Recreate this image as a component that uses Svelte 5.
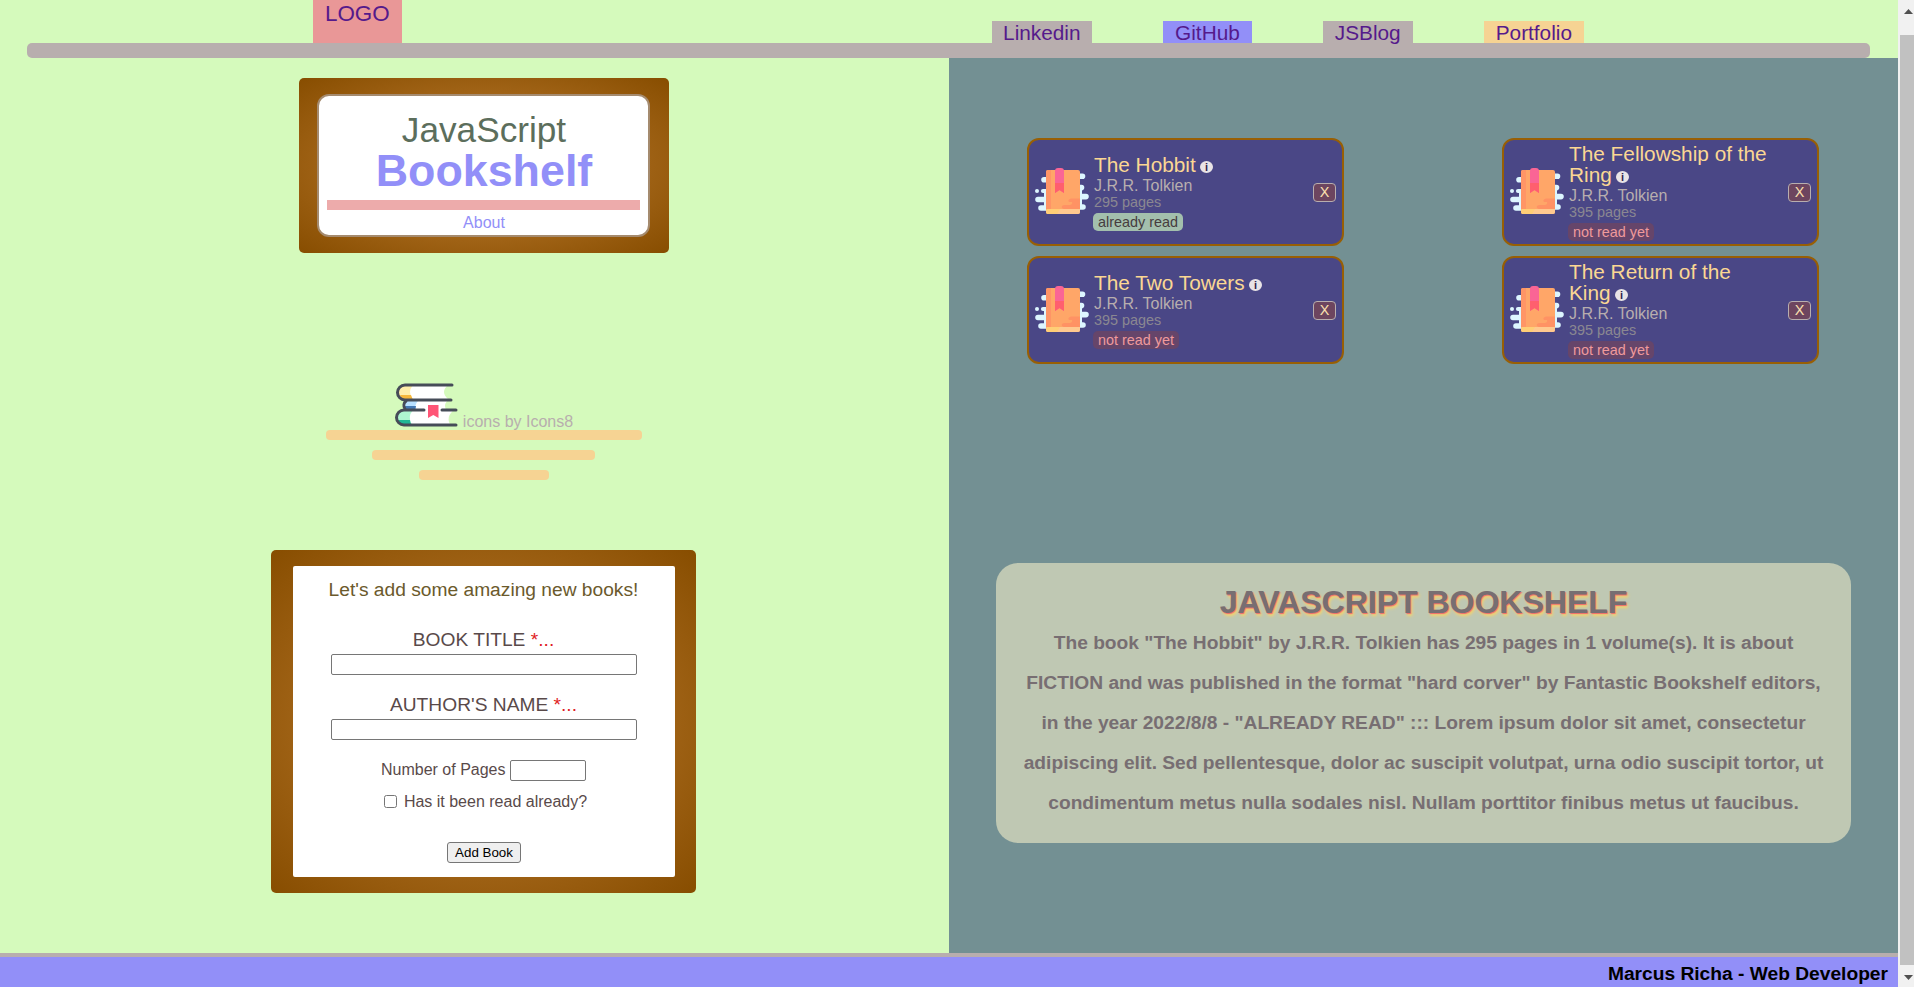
<script>
  const links = [
    { label: 'Linkedin', tone: 'grey' },
    { label: 'GitHub', tone: 'violet' },
    { label: 'JSBlog', tone: 'grey' },
    { label: 'Portfolio', tone: 'sand' }
  ];

  let books = $state([
    { title: 'The Hobbit', author: 'J.R.R. Tolkien', pages: 295, read: true },
    { title: 'The Fellowship of the Ring', author: 'J.R.R. Tolkien', pages: 395, read: false },
    { title: 'The Two Towers', author: 'J.R.R. Tolkien', pages: 395, read: false },
    { title: 'The Return of the King', author: 'J.R.R. Tolkien', pages: 395, read: false }
  ]);

  let title = $state('');
  let author = $state('');
  let pages = $state('');
  let read = $state(false);

  function addBook(event) {
    event.preventDefault();
    if (title && author) books.push({ title, author, pages, read });
  }

  function removeBook(book) {
    books = books.filter((b) => b !== book);
  }
</script>

<div class="window">
  <div class="page">
    <header>
      <a class="logo" href="#logo">LOGO</a>
      <nav>
        {#each links as link}
          <a class={link.tone} href="#{link.label}">{link.label}</a>
        {/each}
      </nav>
    </header>
    <div class="shelf-line"></div>

    <main>
      <section class="left">
        <div class="sign wood">
          <div class="sign-face">
            <div class="sign-top">JavaScript</div>
            <div class="sign-name">Bookshelf</div>
            <div class="sign-bar"></div>
            <div class="about">About</div>
          </div>
        </div>

        <div class="credits">
          <div class="credit-row">
            <svg class="stack" width="66" height="46" viewBox="0 0 66 46" fill="none">
              <path d="M11 3H54Q46 10 54 17H11A7 7 0 0 1 11 3Z" fill="#fff" />
              <path d="M12 3h7q-6 7 0 15h-7A7.5 7.5 0 0 1 12 3Z" fill="#ffeeaa" />
              <path d="M6 13h11l2 5h-7q-4 0-6-5Z" fill="#f6b73c" />
              <path d="M14 19H53Q49 24 53 29H14A5 5 0 0 1 14 19Z" fill="#fff" />
              <path d="M14 19h10q-4 4-2 10h-8A5 5 0 0 1 14 19Z" fill="#b8e0ff" />
              <path d="M10 24h12q-1 3 0 5h-8q-4-1-4-5Z" fill="#4479b4" />
              <path d="M10 28H60Q51 35 57 44H10A7 7 0 0 1 10 28Z" fill="#fff" />
              <path d="M10 28h9q-6 7-1 15h-8A7.500 7.500 0 0 1 10 28Z" fill="#aef6d0" />
              <path d="M4 38h12q0 3 2 5h-7q-6 0-7-5Z" fill="#20b795" />
              <g stroke="#464c58" stroke-width="3" stroke-linecap="round">
                <path d="M58 3H11a7.500 7.500 0 0 0 0 15h46" />
                <path d="M12 19a6 6 0 0 0-1 8" />
                <path d="M30 28H10a7.500 7.500 0 0 0 0 15h52M48 28h14" />
              </g>
              <path d="M34 23h10.500v13l-5.200-3-5.300 3Z" fill="#ff5576" />
            </svg>
            <span>icons by Icons8</span>
          </div>
          <div class="plank wide"></div>
          <div class="plank medium"></div>
          <div class="plank narrow"></div>
        </div>

        <div class="form-frame wood">
          <form onsubmit={addBook}>
            <div class="form-title">Let's add some amazing new books!</div>
            <label class="big" for="title">BOOK TITLE <em>*...</em></label>
            <input class="text" id="title" type="text" bind:value={title} />
            <label class="big" for="author">AUTHOR'S NAME <em>*...</em></label>
            <input class="text" id="author" type="text" bind:value={author} />
            <div class="pages-row">
              <label for="pages">Number of Pages</label>
              <input class="num" id="pages" type="text" bind:value={pages} />
            </div>
            <div class="read-row">
              <input id="read" type="checkbox" bind:checked={read} />
              <label for="read">Has it been read already?</label>
            </div>
            <button class="add" type="submit">Add Book</button>
          </form>
        </div>
      </section>

      <section class="right">
        <div class="cards">
          {#each books as book}
            <article class="card">
              <svg class="book" width="54" height="46" viewBox="0 0 54 46">
                <rect x="9" y="21" width="38" height="19" fill="#ddf6ff" />
                <g stroke="#ddf6ff" stroke-width="5.600" stroke-linecap="round">
                  <path d="M9 11.700h5M42 8.300h5.500M42 19.600h4.500M42 28.600h9M3 31.500h9M42 39h6M6 40h8" />
                </g>
                <circle cx="2" cy="23" r="2" fill="#ddf6ff" />
                <path d="M8 23h4" stroke="#ddf6ff" stroke-width="4.200" stroke-linecap="round" />
                <rect x="11" y="2" width="34" height="44" rx="2" fill="#ffa668" />
                <path d="M11 4q0-2 2-2h3v39h-5Z" fill="#ff9566" />
                <path d="M29 30.500h3M36 30.500h9V41H29q-3-1-2-3 1-1 3-1h5q3-1 2-3h-3q-2-2 2-3.500Z" fill="#ff9264" />
                <path d="M11 43q0-2 2-2h32v3q0 2-2 2H13q-2 0-2-3Z" fill="#ffc98f" />
                <path d="M11 43q0-2 2-2h12l-3 5h-9q-2 0-2-3Z" fill="#ffce76" />
                <path d="M20 3q0-3 3-3h3q3 0 3 3v22l-4.500-3-4.500 3Z" fill="#fa6595" />
                <path d="M20 15h9v10l-4.500-3-4.500 3Z" fill="#ff5f6e" />
              </svg>
              <div class="info">
                <h3>{book.title} <span class="dot">i</span></h3>
                <div class="author">{book.author}</div>
                <div class="pages">{book.pages} pages</div>
                <span class="status" class:read={book.read}>{book.read ? 'already read' : 'not read yet'}</span>
              </div>
              <button class="remove" onclick={() => removeBook(book)}>X</button>
            </article>
          {/each}
        </div>

        <div class="panel">
          <h1>JAVASCRIPT BOOKSHELF</h1>
          <p>
            The book "The Hobbit" by J.R.R. Tolkien has 295 pages in 1 volume(s). It is about FICTION
            and was published in the format "hard corver" by Fantastic Bookshelf editors, in the year
            2022/8/8 - "ALREADY READ" ::: Lorem ipsum dolor sit amet, consectetur adipiscing elit. Sed
            pellentesque, dolor ac suscipit volutpat, urna odio suscipit tortor, ut condimentum metus
            nulla sodales nisl. Nullam porttitor finibus metus ut faucibus.
          </p>
        </div>
      </section>
    </main>

    <footer>Marcus Richa - Web Developer</footer>
  </div>

  <div class="scrollbar">
    <svg width="16" height="35" viewBox="0 0 16 35"><path d="M6 14l4.500-5 4.500 5Z" fill="#505050" /></svg>
    <div class="thumb"></div>
    <svg width="16" height="22" viewBox="0 0 16 22"><path d="M6 10l4.500 5 4.500-5Z" fill="#505050" /></svg>
  </div>
</div>

<style>
  :global(body) {
    overflow: hidden;
  }
  .window {
    display: flex;
    width: 1914px;
    height: 987px;
    font-family: 'Liberation Sans', Arial, sans-serif;
    font-size: 16px;
  }
  .window :where(*) {
    box-sizing: border-box;
  }
  .page {
    display: flex;
    flex-direction: column;
    width: 1898px;
    background: #d5fabc;
  }
  header {
    z-index: 1;
    display: flex;
    justify-content: space-between;
    align-items: flex-end;
    height: 43px;
    padding: 0 314px 0 313px;
  }
  header a {
    color: #551a8b;
    text-decoration: none;
    padding: 0 12px;
  }
  .logo {
    height: 43px;
    background: #e99797;
    font-size: 22.4px;
    line-height: 28px;
  }
  nav {
    display: flex;
    gap: 71px;
  }
  nav a {
    height: 22px;
    font-size: 20.8px;
    line-height: 24px;
  }
  nav a:first-child {
    padding: 0 11.500px;
  }
  .grey {
    background: #b8aeae;
  }
  .violet {
    background: #928ff8;
  }
  .sand {
    background: #f6d393;
  }
  .shelf-line {
    height: 15px;
    margin: 0 28px 0 27px;
    border-radius: 5px;
    background: #b8aeae;
  }
  main {
    display: flex;
    height: 895px;
  }
  .left {
    display: flex;
    flex-direction: column;
    align-items: center;
    width: 949px;
    padding: 20px 0 0 19px;
  }
  .wood {
    border-radius: 5px;
    background: radial-gradient(#c58336, #874d00);
  }
  .sign {
    width: 370px;
    height: 175px;
    padding: 16px 19px 16px 18px;
  }
  .sign-face {
    height: 143px;
    padding: 16px 8px 0;
    border: 2px solid #a58b6f;
    border-radius: 12px;
    background: #fff;
    text-align: center;
  }
  .sign-top {
    padding-left: 1px;
    color: #5c6e5c;
    font-size: 35.2px;
    line-height: 35px;
  }
  .sign-name {
    padding-left: 1px;
    color: #928ff8;
    font-size: 44.8px;
    font-weight: bold;
    line-height: 47px;
  }
  .sign-bar {
    height: 10px;
    margin-top: 6px;
    background: #edabab;
  }
  .about {
    padding-left: 1px;
    color: #928ff8;
    line-height: 26px;
  }
  .credits {
    display: flex;
    flex-direction: column;
    align-items: center;
    gap: 10px;
    margin-top: 129px;
  }
  .credit-row {
    display: flex;
    align-items: flex-end;
    height: 48px;
    margin: 0 1px -10px 0;
    color: #b8aeae;
    line-height: 16px;
  }
  .stack {
    margin: 0 3px 2px 0;
  }
  .plank {
    height: 10px;
    border-radius: 4px;
    background: #f6d393;
  }
  .wide {
    width: 316px;
  }
  .medium {
    width: 223px;
    margin-right: 1px;
  }
  .narrow {
    width: 130px;
  }
  .form-frame {
    width: 425px;
    height: 343px;
    margin: 70px 1px 0 0;
    padding: 16px 21px 16px 22px;
  }
  form {
    display: flex;
    flex-direction: column;
    align-items: center;
    height: 311px;
    padding-top: 12px;
    border-radius: 2px;
    background: #fff;
    color: #594a4a;
  }
  .form-title {
    margin: 0 1px 27px 0;
    color: #6b5a2c;
    font-size: 19.2px;
    line-height: 23px;
  }
  .big {
    margin: 0 1px 3px 0;
    font-size: 19.2px;
    line-height: 23px;
  }
  em {
    color: #e01c24;
    font-style: normal;
  }
  input.text,
  input.num {
    height: 21px;
    margin: 0;
    padding: 1px 2px;
    border: 1px solid #767676;
    border-radius: 2px;
    background: #fff;
  }
  input.text {
    width: 306px;
  }
  input.text + .big {
    margin-top: 18px;
  }
  .pages-row {
    display: flex;
    align-items: flex-start;
    gap: 4.500px;
    margin: 20px 1px 0 0;
    line-height: 19px;
  }
  input.num {
    width: 76px;
  }
  .read-row {
    display: flex;
    align-items: center;
    gap: 7px;
    margin: 12px 0 0 3px;
    line-height: 18px;
  }
  .read-row input {
    width: 13px;
    height: 13px;
    margin: 0 0 2px;
  }
  .add {
    width: 74px;
    height: 21px;
    margin-top: 31px;
    padding: 0;
    border: 1px solid #767676;
    border-radius: 3px;
    background: #efefef;
    color: #000;
    font: 13.333px 'Liberation Sans', Arial, sans-serif;
  }
  .right {
    width: 949px;
    padding: 80px 47px 0;
    background: #739093;
  }
  .cards {
    display: grid;
    grid-template-columns: 317px 317px;
    grid-auto-rows: 108px;
    gap: 10px 158px;
    height: 425px;
    padding-left: 31px;
  }
  .card {
    display: flex;
    align-items: center;
    padding: 0 6px;
    border: 2px solid #985f05;
    border-radius: 12px;
    background: #4a4786;
  }
  .book {
    flex: none;
    margin: -2px 5px 0 0;
    overflow: visible;
  }
  .info {
    width: 203px;
    margin-right: 16px;
  }
  h3 {
    margin: 0 0 2px;
    color: #fbd793;
    font-size: 20.8px;
    font-weight: normal;
    line-height: 21px;
  }
  .dot {
    display: inline-block;
    width: 13px;
    height: 12px;
    margin-left: -1.500px;
    border-radius: 50%;
    background: #e9e4e6;
    color: #33254f;
    font-size: 11px;
    font-weight: bold;
    line-height: 12px;
    text-align: center;
    vertical-align: 1px;
  }
  .author {
    color: #b8aeae;
    line-height: 17px;
  }
  .pages {
    color: #8a8791;
    font-size: 14.4px;
    line-height: 16px;
  }
  .status {
    display: block;
    width: fit-content;
    height: 18px;
    margin: 3px 0 0 -1px;
    padding: 0 5px;
    border-radius: 5px;
    background: #66456a;
    color: #f09a9c;
    font-size: 14.4px;
    line-height: 18px;
  }
  .status.read {
    background: #a3bfad;
    color: #463c40;
  }
  .remove {
    width: 23px;
    height: 19px;
    padding: 0;
    border: 1px solid #b8aeae;
    border-radius: 4px;
    background: #6d455f;
    color: #fbe0b0;
    font: 14.4px/16px 'Liberation Sans', Arial, sans-serif;
  }
  .panel {
    width: 855px;
    height: 280px;
    padding: 21px 20px 0;
    border-radius: 22px;
    background: #bfc8b3;
    color: #776e72;
    text-align: center;
  }
  h1 {
    margin: 0;
    font-size: 32px;
    line-height: 36px;
    text-shadow:
      1px 1px 1px #f06a6a,
      2px 3px 3px #f6d36a;
  }
  p {
    margin: 3px 0 0;
    font-size: 19.2px;
    font-weight: bold;
    line-height: 40px;
  }
  footer {
    height: 34px;
    padding-right: 10px;
    border-top: 4px solid #b8aeae;
    background: #928ff8;
    color: #000;
    font-size: 19.2px;
    font-weight: bold;
    line-height: 33px;
    text-align: right;
  }
  .scrollbar {
    display: flex;
    flex-direction: column;
    width: 16px;
    background: #f1f1f1;
  }
  .thumb {
    flex: 1;
    margin-left: 2px;
    background: #c1c1c1;
  }
</style>
